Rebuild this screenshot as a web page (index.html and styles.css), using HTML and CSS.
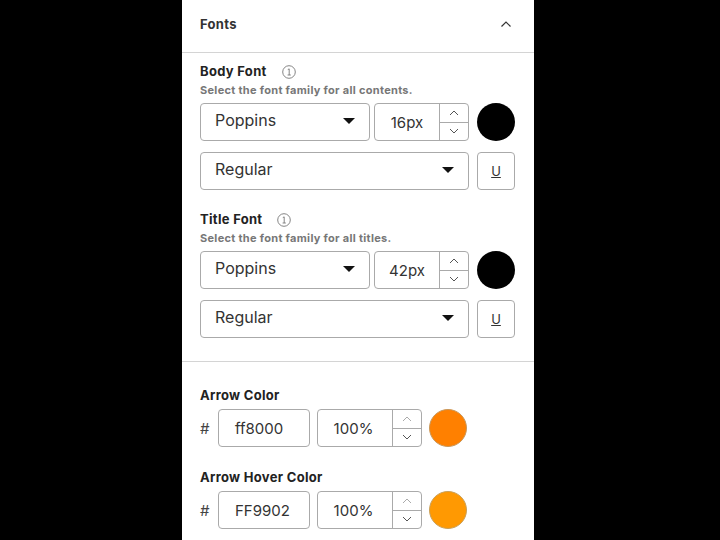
FILE: index.html
```html
<!DOCTYPE html>
<html lang="en">
<head>
	<meta charset="UTF-8">
	<title>Fonts</title>
	<link rel="stylesheet" href="styles.css">
</head>
<body>
	<div class="panel">
		<div class="panel-head">
			<h3>Fonts</h3>
			<svg class="head-arrow" width="12" height="8" viewBox="0 0 12 8"><path d="M1.5 6.5 6 2l4.5 4.5" fill="none" stroke="#333" stroke-width="1.2"/></svg>
		</div>

		<div class="font-group body-font">
			<div class="label-row">
				<span class="label">Body Font</span>
				<svg class="info" width="14" height="14" viewBox="0 0 14 14"><circle cx="7" cy="7" r="6.3" fill="none" stroke="#777" stroke-width=".9"/><path d="M5.8 4.6 7.2 3.9V10M5.6 10h3.2" fill="none" stroke="#777" stroke-width=".9"/></svg>
			</div>
			<p class="desc">Select the font family for all contents.</p>
			<div class="row">
				<div class="box select select-short"><span>Poppins</span><i class="caret"></i></div>
				<div class="box num num-font">
					<span class="num-val">16px</span>
					<div class="step">
						<div class="step-btn"><svg width="10" height="6" viewBox="0 0 10 6"><path d="M1 5 5 1l4 4" fill="none" stroke="#555" stroke-width="1"/></svg></div>
						<div class="step-btn"><svg width="10" height="6" viewBox="0 0 10 6"><path d="M1 1l4 4 4-4" fill="none" stroke="#555" stroke-width="1"/></svg></div>
					</div>
				</div>
				<div class="swatch black"></div>
			</div>
			<div class="row">
				<div class="box select select-long"><span>Regular</span><i class="caret"></i></div>
				<div class="box under"><u>U</u></div>
			</div>
		</div>

		<div class="font-group title-font">
			<div class="label-row">
				<span class="label">Title Font</span>
				<svg class="info" width="14" height="14" viewBox="0 0 14 14"><circle cx="7" cy="7" r="6.3" fill="none" stroke="#777" stroke-width=".9"/><path d="M5.8 4.6 7.2 3.9V10M5.6 10h3.2" fill="none" stroke="#777" stroke-width=".9"/></svg>
			</div>
			<p class="desc">Select the font family for all titles.</p>
			<div class="row">
				<div class="box select select-short"><span>Poppins</span><i class="caret"></i></div>
				<div class="box num num-font">
					<span class="num-val">42px</span>
					<div class="step">
						<div class="step-btn"><svg width="10" height="6" viewBox="0 0 10 6"><path d="M1 5 5 1l4 4" fill="none" stroke="#555" stroke-width="1"/></svg></div>
						<div class="step-btn"><svg width="10" height="6" viewBox="0 0 10 6"><path d="M1 1l4 4 4-4" fill="none" stroke="#555" stroke-width="1"/></svg></div>
					</div>
				</div>
				<div class="swatch black"></div>
			</div>
			<div class="row">
				<div class="box select select-long"><span>Regular</span><i class="caret"></i></div>
				<div class="box under"><u>U</u></div>
			</div>
		</div>

		<div class="colors">
			<div class="color-group">
				<div class="label">Arrow Color</div>
				<div class="row color-row">
					<span class="hash">#</span>
					<div class="box hex">ff8000</div>
					<div class="box num num-alpha">
						<span class="num-val">100%</span>
						<div class="step">
							<div class="step-btn"><svg width="10" height="6" viewBox="0 0 10 6"><path d="M1 5 5 1l4 4" fill="none" stroke="#aaa" stroke-width="1"/></svg></div>
							<div class="step-btn"><svg width="10" height="6" viewBox="0 0 10 6"><path d="M1 1l4 4 4-4" fill="none" stroke="#555" stroke-width="1"/></svg></div>
						</div>
					</div>
					<div class="swatch orange"></div>
				</div>
			</div>
			<div class="color-group">
				<div class="label">Arrow Hover Color</div>
				<div class="row color-row">
					<span class="hash">#</span>
					<div class="box hex">FF9902</div>
					<div class="box num num-alpha">
						<span class="num-val">100%</span>
						<div class="step">
							<div class="step-btn"><svg width="10" height="6" viewBox="0 0 10 6"><path d="M1 5 5 1l4 4" fill="none" stroke="#aaa" stroke-width="1"/></svg></div>
							<div class="step-btn"><svg width="10" height="6" viewBox="0 0 10 6"><path d="M1 1l4 4 4-4" fill="none" stroke="#555" stroke-width="1"/></svg></div>
						</div>
					</div>
					<div class="swatch amber"></div>
				</div>
			</div>
		</div>
	</div>
</body>
</html>
```
FILE: styles.css
```css
*{
	margin: 0;
	padding: 0;
	box-sizing: border-box;
}
body{
	width: 720px;
	height: 540px;
	overflow: hidden;
	background: #000;
	font-family: "Inter", "Liberation Sans", sans-serif;
	color: #222;
}
.panel{
	width: 352px;
	height: 540px;
	margin-left: 182px;
	background: #fff;
	overflow: hidden;
}
/*顶部标题*/
.panel-head{
	display: flex;
	align-items: center;
	justify-content: space-between;
	height: 53px;
	padding: 0 22px 4px 18px;
	border-bottom: 1px solid #d4d4d4;
}
.panel-head h3{
	font-size: 13px;
	font-weight: 700;
	letter-spacing: .3px;
	color: #333;
}
/*字体设置*/
.font-group{
	padding: 0 19px 0 18px;
}
.body-font{
	padding-top: 10px;
}
.title-font{
	padding-top: 21px;
	padding-bottom: 23px;
	border-bottom: 1px solid #d4d4d4;
}
.label-row{
	display: flex;
	align-items: center;
	gap: 15px;
	height: 17px;
}
.label{
	font-size: 13px;
	font-weight: 700;
	letter-spacing: .3px;
	color: #222;
	line-height: 17px;
}
.desc{
	font-size: 11px;
	font-weight: 700;
	letter-spacing: .3px;
	color: #777;
	line-height: 14px;
	margin-top: 3px;
	margin-bottom: 6px;
}
.row{
	display: flex;
	gap: 4px;
	height: 38px;
}
.row + .row{
	margin-top: 11px;
}
.box{
	display: flex;
	align-items: center;
	height: 38px;
	border: 1px solid #aaa;
	border-radius: 4px;
	background: #fff;
	color: #333;
}
.select{
	justify-content: space-between;
	padding: 0 14px;
	font-size: 16px;
}
.select span{
	position: relative;
	top: -2px;
}
.select-short{
	width: 170px;
}
.select-long{
	width: 269px;
}
.caret{
	position: relative;
	top: -1px;
	width: 0;
	height: 0;
	border-left: 6px solid transparent;
	border-right: 6px solid transparent;
	border-top: 6px solid #111;
}
.num{
	overflow: hidden;
	font-size: 15px;
}
.num-font{
	width: 95px;
}
.num-alpha{
	width: 105px;
}
.num-alpha .num-val{
	padding-right: 3px;
}
.num-val{
	flex: 1;
	text-align: center;
}
.step{
	display: flex;
	flex-direction: column;
	width: 29px;
	height: 100%;
	border-left: 1px solid #aaa;
}
.step-btn{
	display: flex;
	align-items: center;
	justify-content: center;
	flex: 1;
}
.step-btn + .step-btn{
	border-top: 1px solid #aaa;
}
.swatch{
	width: 38px;
	height: 38px;
	border-radius: 50%;
	margin-left: 4px;
}
.black{
	background: #000;
}
.orange{
	background: #ff8000;
	border: 1px solid #c9975a;
}
.amber{
	background: #ff9902;
	border: 1px solid #c9a05a;
}
.under{
	justify-content: center;
	width: 38px;
	margin-left: 4px;
	font-size: 13px;
}
/*颜色设置*/
.colors{
	padding: 25px 18px 0;
}
.color-group{
	margin-bottom: 22px;
}
.color-group .label{
	margin-bottom: 5px;
}
.color-row{
	align-items: center;
	gap: 0;
}
.hash{
	width: 18px;
	font-size: 15px;
	color: #444;
}
.hex{
	justify-content: flex-start;
	width: 92px;
	margin-right: 7px;
	padding-left: 16px;
	font-size: 15px;
}
.color-row .swatch{
	margin-left: 7px;
}
```
